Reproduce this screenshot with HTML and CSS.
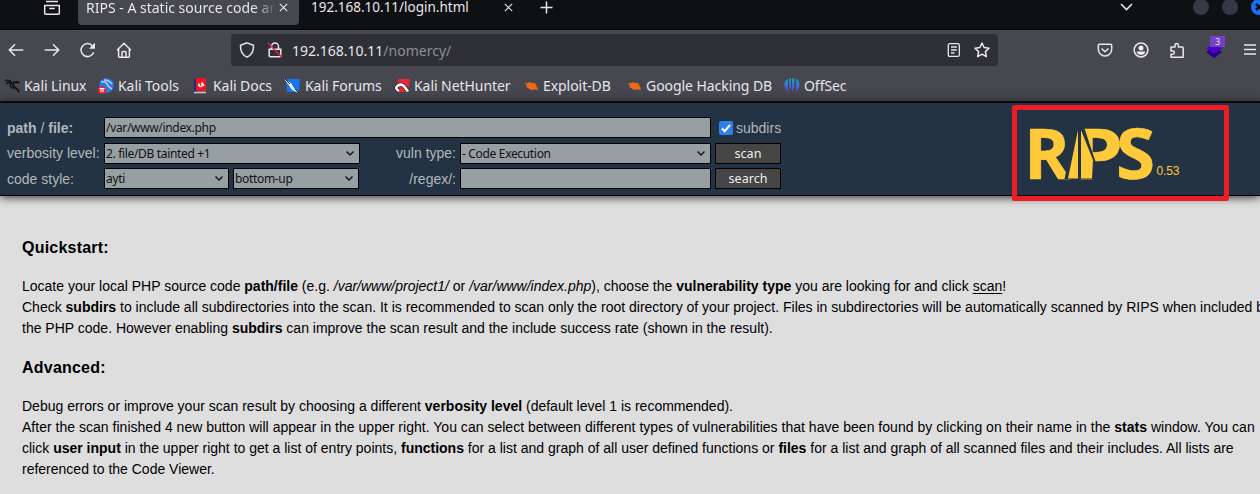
FILE: index.html
```html
<!DOCTYPE html>
<html lang="en">
<head>
<meta charset="utf-8">
<title>RIPS - A static source code analyser</title>
<link rel="stylesheet" href="styles.css">
</head>
<body>
<div class="tabs">
  <svg class="view-icon" width="18" height="18" viewBox="0 0 18 18" fill="none" stroke="#e8e8ec" stroke-width="1.5"><path d="M3 2.500h12M1.700 6.500h14.600v7.700q0 1-1 1H2.700q-1 0-1-1zM6.300 9.500h5.400"/></svg>
  <span class="tab-sep"></span>
  <div class="tab active"><span class="tab-label fade">RIPS - A static source code an</span><svg class="close" width="9" height="9" viewBox="0 0 9 9"><path d="M.8.8l7.400 7.400M8.200.8L.8 8.200"/></svg></div>
  <div class="tab other"><span class="tab-label t2">192.168.10.11/login.html</span><svg class="close" width="9" height="9" viewBox="0 0 9 9"><path d="M.8.8l7.400 7.400M8.200.8L.8 8.200"/></svg></div>
  <svg class="plus" width="13" height="13" viewBox="0 0 13 13"><path d="M6.500.5v12M.5 6.500h12"/></svg>
  <svg class="chev" width="13" height="8" viewBox="0 0 13 8"><path d="M1 1l5.500 5.500L12 1"/></svg>
  <div class="win"><i></i><i></i><i class="x"><svg width="16" height="16" viewBox="0 0 16 16"><path d="M5 5l6 6M11 5l-6 6" stroke="#10131c" stroke-width="2.500"/></svg></i></div>
</div>
<div class="nav">
  <svg class="ic back" width="16" height="16" viewBox="0 0 16 16"><path d="M15.300 8H1.500M7 2.300L1.300 8 7 13.700"/></svg>
  <svg class="ic fwd" width="16" height="16" viewBox="0 0 16 16"><path d="M.7 8h13.800M9 2.300L14.700 8 9 13.700"/></svg>
  <svg class="ic reload" width="16" height="16" viewBox="0 0 16 16"><path d="M13.700 10.200A6.500 6.500 0 1 1 12.600 4"/><path d="M15 .8v6H9z" fill="#e8e8ec" stroke="none"/></svg>
  <svg class="ic home" width="16" height="16" viewBox="0 0 16 16"><path d="M1 8.200L8 1.200l7 7M2.600 7v7.300q0 .9.900.9h9q.9 0 .9-.9V7M6 15v-4.500q0-1 1-1h2q1 0 1 1V15"/></svg>
  <div class="url">
    <svg class="ic" width="16" height="16" viewBox="0 0 16 16"><path d="M8 .9l6.500 2.500c.3 5.500-1.500 9.500-6.500 11.700C3 12.900 1.200 8.900 1.500 3.400z"/></svg>
    <svg class="ic lock" width="16" height="16" viewBox="0 0 16 16"><path d="M4.500 7V4.500a3.500 3.500 0 0 1 7 0V7M2.200 7.200h11.600v6.500q0 1-1 1H3.200q-1 0-1-1z"/><path d="M1 1l14 14.300" stroke="#e5204c" stroke-width="1.600"/></svg>
    <span class="addr">192.168.10.11<em>/nomercy/</em></span>
    <svg class="ic reader" width="14" height="16" viewBox="0 0 14 16"><rect x="1.300" y="1.700" width="11" height="12.700" rx="1.500"/><path d="M4 5h5.800M4 8h5.800M4 11h3.500" stroke-width="1.300"/></svg>
    <svg class="ic star" width="16" height="16" viewBox="0 0 16 16"><path d="M8 1l2.100 4.500 4.900.7-3.600 3.400.9 5L8 12.200l-4.300 2.400.9-5L1 6.200l4.900-.7z" stroke-linejoin="round"/></svg>
  </div>
  <div class="tools">
    <svg class="ic" width="16" height="16" viewBox="0 0 16 16"><path d="M2.500 2.300h11q1.200 0 1.200 1.200v3.800a6.700 6.700 0 0 1-13.400 0V3.500q0-1.200 1.200-1.200zM4.500 6.500L8 9.800l3.500-3.300"/></svg>
    <svg class="ic" width="16" height="16" viewBox="0 0 16 16"><circle cx="8" cy="8" r="6.900"/><circle cx="8" cy="5.900" r="2.500" fill="#eee" stroke="none"/><path d="M3.700 9.600h8.600q-.5 3.300-4.300 3.300t-4.300-3.300z" fill="#eee" stroke="none"/></svg>
    <svg class="ic" width="16" height="17" viewBox="0 0 16 17"><path d="M2 5h4V3.300a1.700 1.700 0 0 1 3.400 0V5h3.800q1 0 1 1v9.200H2v-3h1.800a1.600 1.600 0 0 0 0-3.200H2z" stroke-linejoin="round"/></svg>
    <div class="ext"><svg width="18" height="18" viewBox="0 0 18 18"><path d="M1 11l8-5 8 5-8 6z" fill="#280085"/><path d="M1 7.500L9 2l8 5.500-8 5.500z" fill="#4e00c9"/></svg><b>3</b></div>
    <svg class="ic" width="14" height="14" viewBox="0 0 14 14"><path d="M1 2h12M1 6.500h12M1 11h12"/></svg>
  </div>
</div>
<div class="marks">
  <div class="bm b1"><svg width="16" height="16" viewBox="0 0 16 16" fill="none" stroke="#111217"><path d="M0 2.500q5-.5 7 2M1 5.500q4-1.500 6-.5" stroke-width="1.600"/><path d="M14.500 5q-4-2-6 0t1 4 4.500 5" stroke-width="1.900"/><path d="M7 5q-3 2-1 4t4 .5" stroke-width="1.300"/></svg><span>Kali Linux</span></div>
  <div class="bm b2"><svg width="16" height="16" viewBox="0 0 16 16"><circle cx="8.500" cy="7.500" r="7.300" fill="#2878ee"/><path d="M3 4q5-1 6 2t5 5M6 2q5 0 8 4" stroke="#a9d0ff" stroke-width="1.500" fill="none"/><circle cx="4" cy="12" r="4" fill="#e72932"/><path d="M1.500 10.500h5M3 10.500v3.500M5 10.500v3.500" stroke="#fff"/></svg><span>Kali Tools</span></div>
  <div class="bm b3"><svg width="16" height="16" viewBox="0 0 16 16"><path d="M0 1h3v14H0z" fill="#222d72"/><path d="M2 0h10v13H2z" fill="#ee1725"/><path d="M0 14.500h12" stroke="#d8c8cf" stroke-width="1.500"/><path d="M5 5.500q-.5 3 1.500 3T8 6t2 2" fill="none" stroke="#fff" stroke-width="1.500"/></svg><span>Kali Docs</span></div>
  <div class="bm b4"><svg width="17" height="16" viewBox="0 0 17 16"><path d="M2 1h14l-1 13H3z" fill="#1675ec"/><path d="M0 1l7 4 3 5 5 5-7-3-4-6z" fill="#f3f5f8"/><path d="M1 1l5 5M11 11l4 4" stroke="#25282d"/></svg><span>Kali Forums</span></div>
  <div class="bm b5"><svg width="16" height="16" viewBox="0 0 16 16"><path d="M4 1h12l-2 13H2z" fill="#ec2535"/><path d="M5 13Q0 10 4 7.500t7 2l3 4" fill="none" stroke="#30272d" stroke-width="4"/><path d="M5 13Q0 10 4 7.500t7 2l3 4" fill="none" stroke="#fff" stroke-width="2.500"/></svg><span>Kali NetHunter</span></div>
  <div class="bm b6"><svg width="16" height="16" viewBox="0 0 16 16"><path d="M1 5l3 .3L5 4l3 1 3 0 2 4 1 3-3-.5-4 .5-3-2-2-1 1-1z" fill="#ef6818"/></svg><span>Exploit-DB</span></div>
  <div class="bm b7"><svg width="16" height="16" viewBox="0 0 16 16"><path d="M1 5l3 .3L5 4l3 1 3 0 2 4 1 3-3-.5-4 .5-3-2-2-1 1-1z" fill="#ef6818"/></svg><span>Google Hacking DB</span></div>
  <div class="bm b8"><svg width="16" height="16" viewBox="0 0 16 16"><defs><linearGradient id="g" x2="0" y2="1"><stop stop-color="#13a5bd"/><stop offset="1" stop-color="#6038e8"/></linearGradient></defs><path d="M4 1v12.500Q0 11 .3 6 1 2 4 1zM5.200.8L7 .3V12l-1.800-3zM8 .3l2.300.5V9L8 15.500zM12 1q3 1 3.500 5 0 5-3.500 7.500z" fill="url(#g)"/></svg><span>OffSec</span></div>
</div>
<div class="menu">
  <div class="form">
    <span class="lab"><b>path</b> / <b>file:</b></span><div class="fld path"><span>/var/www/index.php</span></div>
    <label class="sub"><svg width="14" height="14" viewBox="0 0 14 14"><rect width="14" height="14" rx="2" fill="#2f80ed"/><path d="M3 7.500l2.700 2.700L11 4" fill="none" stroke="#fff" stroke-width="2"/></svg><span>subdirs</span></label>
    <span class="lab l2">verbosity level:</span><div class="fld verb"><span>2. file/DB tainted +1</span><svg class="arr" width="10" height="7" viewBox="0 0 10 7"><path d="M1.500 1.500L5 5l3.500-3.500"/></svg></div>
    <span class="lab right l2">vuln type:</span><div class="fld"><span>- Code Execution</span><svg class="arr" width="10" height="7" viewBox="0 0 10 7"><path d="M1.500 1.500L5 5l3.500-3.500"/></svg></div><div class="btn">scan</div>
    <span class="lab">code style:</span><div class="pair"><div class="fld"><span>ayti</span><svg class="arr" width="10" height="7" viewBox="0 0 10 7"><path d="M1.500 1.500L5 5l3.500-3.500"/></svg></div><div class="fld"><span>bottom-up</span><svg class="arr" width="10" height="7" viewBox="0 0 10 7"><path d="M1.500 1.500L5 5l3.500-3.500"/></svg></div></div>
    <span class="lab right">/regex/:</span><div class="fld"></div><div class="btn">search</div>
  </div>
  <div class="logo">
    <svg width="207" height="86" viewBox="0 0 207 86">
      <g class="mark"><text x="7" y="68.500" textLength="46" lengthAdjust="spacingAndGlyphs">R</text><text x="56" y="68.500" textLength="50" lengthAdjust="spacingAndGlyphs">P</text><text x="99" y="68.500" textLength="39" lengthAdjust="spacingAndGlyphs">S</text></g>
      <path d="M59 16L47.500 69H79V53L67 17z" fill="#233343"/>
      <path d="M61 20v48.500H51zM64 20l12 30-1 18.500H64z" fill="#ffca3a"/>
      <text class="ver" x="139.500" y="65" textLength="23">0.53</text>
    </svg>
  </div>
</div>
<main>
  <h3>Quickstart:</h3>
  <p><span class="line p1">Locate your local PHP source code <b>path/file</b> (e.g. <i>/var/www/project1/</i> or <i>/var/www/index.php</i>), choose the <b>vulnerability type</b> you are looking for and click <u>scan</u>!</span>
  <span class="line p2">Check <b>subdirs</b> to include all subdirectories into the scan. It is recommended to scan only the root directory of your project. Files in subdirectories will be automatically scanned by RIPS when included by</span>
  <span class="line p3">the PHP code. However enabling <b>subdirs</b> can improve the scan result and the include success rate (shown in the result).</span></p>
  <h3>Advanced:</h3>
  <p><span class="line p4">Debug errors or improve your scan result by choosing a different <b>verbosity level</b> (default level 1 is recommended).</span>
  <span class="line p5">After the scan finished 4 new button will appear in the upper right. You can select between different types of vulnerabilities that have been found by clicking on their name in the <b>stats</b> window. You can</span>
  <span class="line p6">click <b>user input</b> in the upper right to get a list of entry points, <b>functions</b> for a list and graph of all user defined functions or <b>files</b> for a list and graph of all scanned files and their includes. All lists are</span>
  <span class="line p7">referenced to the Code Viewer.</span></p>
</main>
</body>
</html>
```
FILE: styles.css
```css
* { box-sizing: border-box; }
body { margin: 0; width: 1260px; height: 494px; overflow: hidden; background: #dedede; font-family: "Liberation Sans", Arial, sans-serif; }
svg { display: block; flex: none; }
.tabs, .nav, .marks { font-family: "Noto Sans", sans-serif; color: #e6e6ea; display: flex; white-space: nowrap; }
.tabs { height: 30px; background: #0f1014; border-bottom: 1px solid #050609; font-size: 14px; line-height: 17px; }
.view-icon { margin: -1px 13px 0 43px; }
.tab-sep { width: 1px; height: 29px; background: #38393e; margin-right: 4px; }
.tab { display: flex; }
.active { width: 221px; height: 25px; background: #46474f; border-radius: 0 0 4px 4px; padding-left: 8px; flex: none; }
.tab-label { height: 25px; margin-top: -1px; flex: none; }
.fade { width: 192px; margin-right: 1px; -webkit-mask-image: linear-gradient(90deg, #000 168px, transparent 191px); mask-image: linear-gradient(90deg, #000 168px, transparent 191px); }
.close, .plus, .chev { fill: none; stroke: #e6e6ea; stroke-width: 1.200; }
.close { margin-top: 3px; }
.other { width: 225px; padding-left: 12px; flex: none; font-size: 13.500px; }
.t2 { width: 193px; }
.plus { margin: 1px 0 0 16px; stroke-width: 1.500; }
.chev { margin: 3px 0 0 567px; stroke-width: 1.600; }
.win { display: flex; gap: 13px; margin: -1px 0 0 60px; }
.win i { width: 16px; height: 16px; border-radius: 8px; background: #353946; flex: none; }
.win .x { background: #1d6ff2; }
.nav { height: 40px; background: #46474f; align-items: center; padding-bottom: 1px; border-top: 1px solid #4e4f56; }
.ic { fill: none; stroke: #e8e8ec; stroke-width: 1.500; }
.back { margin-left: 8px; }
.fwd, .reload { margin-left: 20px; }
.home { margin-left: 20px; }
.url { margin-left: 99px; width: 767px; height: 32px; border-radius: 4px; background: #2f3036; display: flex; align-items: center; padding-left: 8px; flex: none; }
.lock { margin-left: 12px; }
.addr { margin-left: 9px; width: 655px; font-size: 14px; line-height: 20px; padding-top: 1px; }
.addr em { font-style: normal; color: #8e8e94; }
.star { margin-left: 13px; }
.reader { stroke-width: 1.300; }
.tools { display: flex; align-items: center; gap: 20px; margin-left: 99px; }
.ext { position: relative; width: 18px; height: 18px; }
.ext b { position: absolute; left: 5px; top: -5px; width: 15px; height: 11px; background: #7441c8; font: 9px/11px "Noto Sans", sans-serif; text-align: center; }
.marks { height: 31px; background: #46474f; padding: 0 0 0 5px; font-size: 14px; letter-spacing: -.06px; }
.bm { display: flex; align-items: center; gap: 3px; height: 31px; }
.b1 { width: 93px; } .b2 { width: 96px; gap: 4px; } .b3 { width: 90px; gap: 3px; } .b4 { width: 110px; gap: 4px; }
.b5 { width: 130px; gap: 4px; } .b6 { width: 103px; } .b7 { width: 157px; } .b8 { gap: 4px; }
.menu { height: 95px; background: #233343; border-top: 2px solid #08090c; border-bottom: 1px solid #000; box-shadow: 0 1px 9px #222; display: flex; color: #b3b7bb; position: relative; }
.form { display: grid; grid-template-columns: 93px 256px 92px 251px 66px; grid-template-rows: 21px 21px 21px; gap: 4.500px 4px; padding: 14px 0 0 7px; width: 1012px; align-content: start; font-size: 14px; line-height: 22px; white-space: nowrap; }
.path { grid-column: 2 / 5; }
.right { text-align: right; }
.l2 { line-height: 20px; }
.fld { background: #989fa2; border: 1px solid #000; color: #101214; font-family: "Noto Sans", sans-serif; font-size: 12px; letter-spacing: -.33px; line-height: 19px; padding: 0 4px 0 1px; display: flex; justify-content: space-between; align-items: center; height: 21px; }
.arr { fill: none; stroke: #15181a; stroke-width: 1.500; }
.pair { display: grid; grid-template-columns: 125px 126px; gap: 4px; }
.btn { background: #454545; border: 1px solid #000; color: #eee; font: 12.600px/20px "Noto Sans", sans-serif; text-align: center; }
.sub { display: flex; align-items: center; gap: 3px; padding-left: 4px; padding-top: 1px; }
.logo { width: 217px; height: 96px; margin-top: 2px; border: 5px solid #ee1c24; border-radius: 2px; flex: none; }
.logo svg { overflow: visible; }
.mark { font: 700 69px "Open Sans", sans-serif; fill: #ffca3a; stroke: #ffca3a; stroke-width: .6; }
.ver { font: 12px "Liberation Sans", sans-serif; fill: #ffca3a; }
main { padding: 42px 0 0 22px; color: #000; font-size: 14px; line-height: 21px; }
h3 { margin: 0 0 18px; font-size: 16px; line-height: 20px; letter-spacing: .22px; }
p { margin: 0 0 19px; }
.line { display: block; white-space: nowrap; }
.p5 { letter-spacing: .02px; }
u { text-underline-offset: 2px; }
```
